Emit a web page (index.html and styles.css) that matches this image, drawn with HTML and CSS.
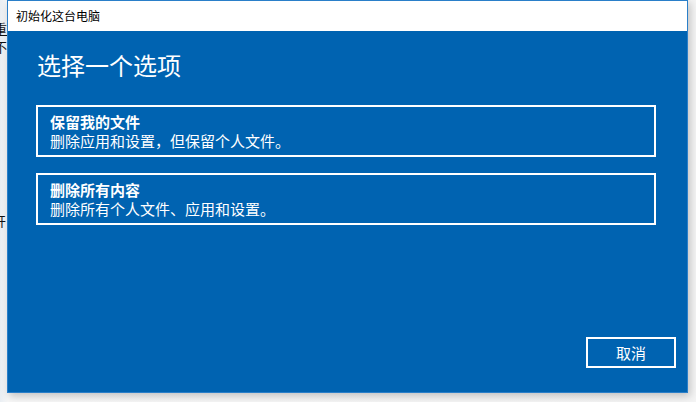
FILE: index.html
```html
<!DOCTYPE html>
<html lang="zh-CN">
<head>
<meta charset="utf-8">
<title>初始化这台电脑</title>
<link rel="stylesheet" href="styles.css">
</head>
<body>
<div class="desktop">
  <span class="bg-text bg-a">重</span>
  <span class="bg-text bg-b">不</span>
  <span class="bg-text bg-c">开</span>
</div>
<div class="window">
  <div class="titlebar">初始化这台电脑</div>
  <div class="content">
    <h1 class="heading">选择一个选项</h1>
    <div class="options">
      <div class="option">
        <div class="option-title">保留我的文件</div>
        <div class="option-desc">删除应用和设置，但保留个人文件。</div>
      </div>
      <div class="option">
        <div class="option-title">删除所有内容</div>
        <div class="option-desc">删除所有个人文件、应用和设置。</div>
      </div>
    </div>
    <div class="footer">
      <button class="btn">取消</button>
    </div>
  </div>
</div>
</body>
</html>
```
FILE: styles.css
```css
html, body {
  margin: 0;
  padding: 0;
}
body {
  width: 696px;
  height: 402px;
  background: #f2f2f2;
  font-family: "Noto Sans CJK SC", "Noto Sans", sans-serif;
  overflow: hidden;
  position: relative;
}
.desktop {
  position: absolute;
  inset: 0;
  background: linear-gradient(90deg, #e9eef3 0, #f7f7f7 8px, #f4f4f4 100%);
}
.bg-text {
  position: absolute;
  font-size: 13px;
  line-height: 14px;
  color: #111;
}
.bg-a { left: -6px; top: 22px; text-decoration: underline; }
.bg-b { left: -6px; top: 40px; }
.bg-c { left: -7px; top: 214px; }

.window {
  position: absolute;
  left: 7px;
  top: 0;
  width: 679px;
  height: 391px;
  border: 1px solid #2a7fc9;
  background: #0063b1;
  display: flex;
  flex-direction: column;
  box-shadow: 2px 3px 8px rgba(0, 0, 0, 0.22);
}
.titlebar {
  height: 30px;
  flex: none;
  background: #fff;
  color: #000;
  font-size: 12px;
  line-height: 30px;
  padding-left: 8px;
}
.content {
  flex: 1;
  display: flex;
  flex-direction: column;
  padding: 18px 11px 24px 28px;
  color: #fff;
}
.heading {
  margin: 0;
  font-size: 24px;
  line-height: 32px;
  font-weight: 400;
  padding-left: 1px;
}
.options {
  margin-top: 24px;
  display: flex;
  flex-direction: column;
  gap: 16px;
  width: 620px;
}
.option {
  border: 2px solid #fff;
  height: 48px;
  box-sizing: content-box;
  padding: 0 12px;
  display: flex;
  flex-direction: column;
  justify-content: center;
}
.option-title {
  font-size: 15px;
  font-weight: 700;
  line-height: 19px;
}
.option-desc {
  font-size: 15px;
  line-height: 19px;
}
.footer {
  margin-top: auto;
  display: flex;
  justify-content: flex-end;
}
.btn {
  width: 90px;
  height: 31px;
  border: 2px solid #fff;
  background: transparent;
  color: #fff;
  font-family: inherit;
  font-size: 15px;
  line-height: 1;
  padding: 0;
}
```
